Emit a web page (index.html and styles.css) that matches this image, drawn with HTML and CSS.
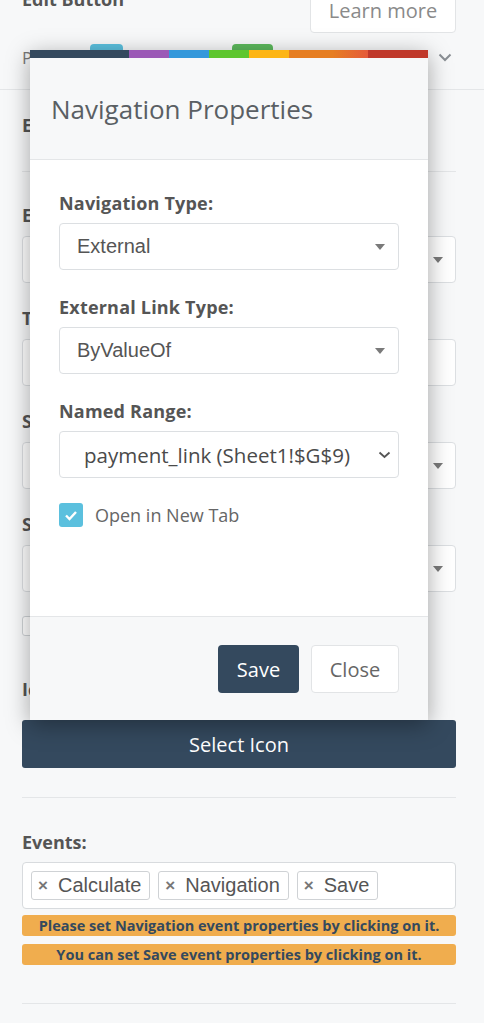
FILE: index.html
```html
<!DOCTYPE html>
<html>
<head>
<meta charset="utf-8">
<link rel="stylesheet" href="styles.css">
</head>
<body>
<div class="page">
  <div class="top">
    <div class="head-row">
      <div class="page-title">Edit Button</div>
      <button class="learn">Learn more</button>
    </div>
    <div class="sub-row">
      <div class="ids">
        <span class="lbl1">Parent Id</span><span class="badge blue"></span>
        <span class="lbl2">Control Id</span><span class="badge green"></span>
      </div>
      <svg class="chev" width="14" height="9" viewBox="0 0 14 9"><path d="M1.5 1.5 L7 7 L12.5 1.5" fill="none" stroke="#8a8f94" stroke-width="2"/></svg>
    </div>
  </div>

  <div class="content">
    <div class="section sec-first">
      <div class="label">Edit Properties</div>
    </div>
    <div class="section sec-form">
      <div class="field">
        <div class="label">Element Type:</div>
        <div class="ctrl"><span>Button</span><span class="caret"></span></div>
      </div>
      <div class="field">
        <div class="label">Text:</div>
        <div class="ctrl"><span>Pay now</span></div>
      </div>
      <div class="field">
        <div class="label">Style:</div>
        <div class="ctrl"><span>Primary</span><span class="caret"></span></div>
      </div>
      <div class="field">
        <div class="label">Size:</div>
        <div class="ctrl"><span>Default</span><span class="caret"></span></div>
      </div>
      <div class="bg-check"><span class="bg-box"></span><span>Block</span></div>
      <div class="label icon-label">Icon:</div>
      <button class="select-icon">Select Icon</button>
    </div>
    <div class="section sec-events">
      <div class="label">Events:</div>
      <div class="tagbox">
        <span class="tag"><span class="x">×</span>Calculate</span>
        <span class="tag"><span class="x">×</span>Navigation</span>
        <span class="tag"><span class="x">×</span>Save</span>
      </div>
      <div class="warn">Please set Navigation event properties by clicking on it.</div>
      <div class="warn w2">You can set Save event properties by clicking on it.</div>
    </div>
  </div>
</div>

<div class="modal">
  <div class="stripe">
    <span class="s1"></span><span class="s2"></span><span class="s3"></span><span class="s4"></span><span class="s5"></span><span class="s6"></span><span class="s7"></span>
  </div>
  <div class="m-head">Navigation Properties</div>
  <div class="m-body">
    <div class="m-label">Navigation Type:</div>
    <div class="m-select"><span>External</span><span class="caret"></span></div>
    <div class="m-label">External Link Type:</div>
    <div class="m-select"><span>ByValueOf</span><span class="caret"></span></div>
    <div class="m-label">Named Range:</div>
    <div class="m-select native"><span>payment_link (Sheet1!$G$9)</span>
      <svg width="13" height="8" viewBox="0 0 13 8"><path d="M1.5 1.5 L6.5 6 L11.5 1.5" fill="none" stroke="#555" stroke-width="1.8"/></svg>
    </div>
    <div class="m-check">
      <span class="cbox"><svg width="14" height="11" viewBox="0 0 14 11"><path d="M2 5.5 L5.5 9 L12 2" fill="none" stroke="#fff" stroke-width="2.4"/></svg></span>
      <span>Open in New Tab</span>
    </div>
  </div>
  <div class="m-foot">
    <button class="btn-save">Save</button>
    <button class="btn-close">Close</button>
  </div>
</div>
</body>
</html>
```

FILE: styles.css
```css
* { box-sizing: border-box; }
html, body { margin: 0; padding: 0; }
body {
  background: #f7f8f9;
  font-family: "Open Sans", "Liberation Sans", sans-serif;
  color: #555;
  width: 484px;
  height: 1023px;
  overflow: hidden;
  position: relative;
}
.top {
  border-bottom: 1px solid #e4e6e8;
  padding: 0 28px 0 22px;
  height: 102px;
  margin-top: -12px;
}
.head-row {
  display: flex;
  justify-content: space-between;
  align-items: flex-start;
  height: 45px;
}
.page-title {
  font-weight: 700;
  font-size: 18px;
  color: #555;
  line-height: 22px;
}
.learn {
  width: 146px;
  height: 45px;
  background: #fff;
  border: 1px solid #e2e4e6;
  border-radius: 4px;
  font-family: "Open Sans", sans-serif;
  font-size: 20px;
  color: #8a8a8a;
}
.sub-row {
  display: flex;
  justify-content: space-between;
  align-items: center;
  height: 48px;
  padding-right: 4px;
}
.ids { display: flex; align-items: center; font-size: 17px; color: #777; white-space: nowrap; }
.lbl1 { width: 68px; overflow: hidden; }
.lbl2 { width: 109px; overflow: hidden; padding-left: 8px; }
.badge { display: inline-block; height: 18px; border-radius: 4px; margin-top: -8px; }
.badge.blue { background: #5bc0de; width: 33px; }
.badge.green { background: #5cb85c; width: 41px; }

.content { padding: 0 28px 0 22px; }
.section { border-bottom: 1px solid #e4e6e8; }
.sec-first { padding: 24px 0 35px; }
.label {
  font-weight: 700;
  font-size: 18px;
  line-height: 22px;
  color: #555;
}
.sec-form { padding: 32px 0 29px; }
.field { margin-bottom: 24px; }
.field .label { margin-bottom: 10px; }
.ctrl {
  height: 47px;
  background: #fff;
  border: 1px solid #dcdfe2;
  border-radius: 4px;
  display: flex;
  align-items: center;
  justify-content: space-between;
  padding: 0 12px 0 16px;
  font-size: 18px;
  color: #555;
}
.caret {
  width: 0; height: 0;
  border-left: 5px solid transparent;
  border-right: 5px solid transparent;
  border-top: 6px solid #7a7a7a;
}
.bg-check { display: flex; align-items: center; gap: 10px; height: 20px; margin-top: 2px; font-size: 17px; }
.bg-box { width: 20px; height: 20px; border: 1px solid #cfd3d6; border-radius: 3px; background: #fff; }
.icon-label { margin-top: 42px; margin-bottom: 20px; }
.select-icon {
  display: block;
  width: 100%;
  height: 48px;
  border: none;
  border-radius: 3px;
  background: #34495e;
  color: #fff;
  font-family: "Open Sans", sans-serif;
  font-size: 20px;
}
.sec-events { padding: 33px 0 38px; }
.tagbox {
  margin-top: 9px;
  height: 47px;
  background: #fff;
  border: 1px solid #d8dbde;
  border-radius: 4px;
  display: flex;
  align-items: center;
  gap: 8px;
  padding: 0 8px;
}
.tag {
  height: 29px;
  display: inline-flex;
  align-items: center;
  border: 1px solid #cfd2d5;
  border-radius: 3px;
  padding: 0 8px 0 6px;
  font-family: "Liberation Sans", Arial, sans-serif;
  font-size: 20px;
  color: #555;
  background: #fff;
}
.tag .x { font-weight: 700; color: #777; margin-right: 10px; font-size: 17px; }
.warn {
  margin-top: 6px;
  height: 21px;
  line-height: 21px;
  background: #f0ad4e;
  border-radius: 3px;
  text-align: center;
  font-weight: 700;
  font-size: 14.5px;
  color: #34495e;
  white-space: nowrap;
}
.warn.w2 { margin-top: 8px; }

/* modal overlay */
.modal {
  position: absolute;
  top: 50px;
  left: 30px;
  width: 398px;
  height: 670px;
  background: #fff;
  box-shadow: 0 5px 22px rgba(0,0,0,0.35);
  display: flex;
  flex-direction: column;
}
.stripe { display: flex; height: 8px; }
.stripe span { display: block; height: 8px; }
.s1 { width: 99px; background: #34495e; }
.s2 { width: 40px; background: #9b59b6; }
.s3 { width: 40px; background: #3498db; }
.s4 { width: 40px; background: #5dc62f; }
.s5 { width: 40px; background: #fdb515; }
.s6 { width: 79px; background: linear-gradient(to right, #e67e22 0%, #e67e22 55%, #e55a3a 100%); }
.s7 { width: 60px; background: #c0392b; }
.m-head {
  height: 102px;
  background: #f7f8f9;
  border-bottom: 1px solid #e4e6e8;
  display: flex;
  align-items: center;
  padding-left: 21px;
  font-size: 26px;
  font-weight: 400;
  color: #5a5f64;
}
.m-body {
  flex: 1;
  padding: 32px 29px 0;
  background: #fff;
}
.m-label {
  font-weight: 700;
  font-size: 18px;
  letter-spacing: 0.2px;
  line-height: 22px;
  color: #555;
  margin-bottom: 9px;
}
.m-select {
  height: 47px;
  border: 1px solid #dcdfe2;
  border-radius: 4px;
  background: #fff;
  display: flex;
  align-items: center;
  justify-content: space-between;
  padding: 0 13px 0 17px;
  font-family: "Liberation Sans", Arial, sans-serif;
  font-size: 20px;
  color: #555;
  margin-bottom: 26px;
}
.m-select.native {
  padding: 0 7px 0 24px;
  font-family: "Open Sans", sans-serif;
  font-size: 20.5px;
  color: #4a4a4a;
  margin-bottom: 25px;
}
.m-check { display: flex; align-items: center; gap: 12px; font-size: 18px; color: #666; }
.cbox {
  width: 24px; height: 24px;
  border-radius: 3px;
  background: #5bc0de;
  display: flex; align-items: center; justify-content: center;
}
.m-foot {
  height: 104px;
  background: #f7f8f9;
  border-top: 1px solid #e4e6e8;
  display: flex;
  justify-content: flex-end;
  align-items: flex-start;
  gap: 12px;
  padding: 28px 29px 0;
}
.m-foot button {
  height: 48px;
  border-radius: 4px;
  font-family: "Open Sans", sans-serif;
  font-size: 20px;
}
.btn-save { width: 81px; background: #34495e; color: #fff; border: none; }
.btn-close { width: 88px; background: #fff; color: #666; border: 1px solid #e2e4e6; }
```
